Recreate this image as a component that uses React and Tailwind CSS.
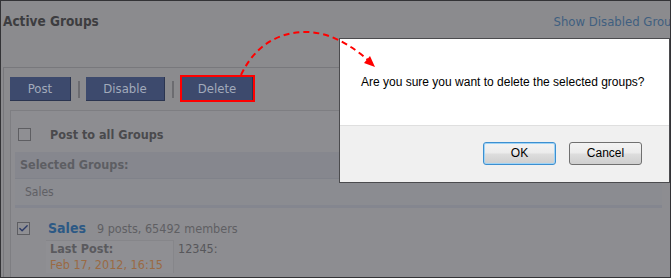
import { Check } from 'lucide-react';

const pageFont = { fontFamily: '"DejaVu Sans Condensed", "DejaVu Sans", sans-serif' };

const Box = ({ checked }) => (
  <span className="flex h-[13px] w-[13px] items-center justify-center border border-[#5e5e62] bg-[#8f8f93]">
    {checked && <Check className="h-[11px] w-[11px] text-[#2c3a66]" strokeWidth={3} />}
  </span>
);

const Sep = () => <span className="ml-[7px] mr-[6px] h-[17px] w-[2px] bg-[#6c6c70]" />;

const navBtn =
  'h-[24px] border-b border-r border-[#2b3550] bg-[#3d4a6d] text-[13px] leading-[24px] text-[#a2aabb]';

const DlgButton = ({ children, focus }) => (
  <button
    className={`h-[23px] w-[73px] rounded-[3px] border bg-[linear-gradient(#f3f3f3_0%,#ececec_45%,#dcdcdc_55%,#cfcfcf_100%)] text-[12px] text-black ${
      focus ? 'border-[#3c8fd0] shadow-[inset_0_0_0_1px_#9fd3f5]' : 'border-[#707070]'
    }`}
  >
    {children}
  </button>
);

export default function App() {
  return (
    <div
      className="relative h-[278px] w-[671px] overflow-hidden border border-[#333336] bg-[#8b8b8e]"
      style={pageFont}
    >
      {/* header */}
      <div className="flex h-[28px] items-center justify-between pl-[2px] pt-[12px]">
        <h1 className="text-[13.5px] font-bold leading-[16px] text-[#3d3d40]">Active Groups</h1>
        <a className="mr-[-15px] mt-[2px] whitespace-nowrap text-[13px] leading-[16px] text-[#3f5f80]">
          Show Disabled Groups
        </a>
      </div>

      {/* panel */}
      <div className="ml-[2px] mt-[38px] border-l border-t border-[#78787c] pl-[6px] pt-[9px]">
        <div className="flex items-center">
          <button className={`${navBtn} w-[61px]`}>Post</button>
          <Sep />
          <button className={`${navBtn} w-[79px]`}>Disable</button>
          <Sep />
          <div className="relative flex">
            <button className={`${navBtn} ml-[2px] w-[71px]`}>Delete</button>
            <span className="absolute -bottom-[1px] -right-[2px] -top-[2px] left-0 z-20 border-2 border-[#ff0000]" />
          </div>
        </div>

        <div className="mt-[9px] border-l border-t border-[#7e7e82] bg-[#8d8d91] pb-[40px] pl-[4px]">
          <div className="mt-[17px] flex h-[13px] items-center pl-[3px]">
            <Box />
            <span className="ml-[19px] text-[12.5px] font-bold leading-[13px] text-[#4a4a4d]">Post to all Groups</span>
          </div>

          <div className="mr-[8px] mt-[11px] border-b-[3px] border-[#84868f] bg-[#86878e]">
            <div className="flex h-[26px] items-center px-[5px] text-[12.5px] font-bold text-[#5d5e63]">
              Selected Groups:
            </div>
            <div className="flex h-[27px] items-center border-t border-[#80828a] bg-[#8b8c91] px-[10px] text-[12px] text-[#606065]">
              Sales
            </div>
          </div>

          <div className="mt-[14px] flex pl-[2px]">
            <Box checked />
            <div className="ml-[18px]">
              <div className="flex items-baseline leading-[13px]">
                <span className="text-[14px] font-bold text-[#2c5985]">Sales</span>
                <span className="ml-[11px] text-[12.5px] text-[#5f5f63]">9 posts, 65492 members</span>
              </div>
              <div className="ml-[-2px] mt-[5px] flex">
                <div className="w-[128px] border-r border-t border-[#86868a] bg-[#8f8f93] pl-[4px]">
                  <div className="text-[12.5px] font-bold leading-[16px] text-[#5a5a5e]">Last Post:</div>
                  <div className="text-[12.5px] leading-[16px] text-[#9a6a44]">Feb 17, 2012, 16:15</div>
                </div>
                <div className="pl-[4px] pt-[1px] text-[12.5px] leading-[16px] text-[#57575b]">12345:</div>
              </div>
            </div>
          </div>
        </div>
      </div>

      {/* confirm dialog */}
      <div
        className="absolute left-[338px] top-[37px] z-10 flex h-[145px] w-[331px] flex-col border border-[#4b4b4e] bg-[#f0f0f0]"
        style={{ fontFamily: '"Liberation Sans", Arial, sans-serif' }}
      >
        <div className="flex h-[87px] items-center border-b border-[#dfdfdf] bg-white pl-[21px] text-[12px] text-black">
          Are you sure you want to delete the selected groups?
        </div>
        <div className="flex flex-1 items-center justify-end gap-[13px] pb-[2px] pr-[27px]">
          <DlgButton focus>OK</DlgButton>
          <DlgButton>Cancel</DlgButton>
        </div>
      </div>

      {/* annotation arrow */}
      <svg className="pointer-events-none absolute left-0 top-0 z-30" width="671" height="278">
        <path
          d="M240 74 C 254 44, 278 31, 305 31 C 330 31, 352 46, 367 59"
          fill="none"
          stroke="#ff0000"
          strokeWidth="2"
          strokeDasharray="6 4"
        />
        <path d="M374 66 L 363 62 L 369 55 Z" fill="#ff0000" />
      </svg>
    </div>
  );
}
